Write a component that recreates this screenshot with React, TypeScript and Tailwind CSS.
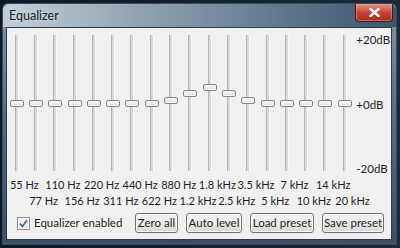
const offsets = [0, 0, 0, 0, 0, 0, 0, 0, -3, -10, -16, -10, -3, 0, 0, 0, 0, 0];

const rowA = ["55 Hz", "110 Hz", "220 Hz", "440 Hz", "880 Hz", "1.8 kHz", "3.5 kHz", "7 kHz", "14 kHz"];
const rowB = ["77 Hz", "156 Hz", "311 Hz", "622 Hz", "1.2 kHz", "2.5 kHz", "5 kHz", "10 kHz", "20 kHz"];

const Slider = ({ offset }: { offset: number }) => (
  <div className="relative flex h-full w-[19.31px] justify-center">
    <div className="mt-[2px] h-[136px] w-[4px] border-l border-r border-l-[#b4b4b4] border-r-[#fbfbfb] bg-[#d9d9d9]" />
    <div
      className="absolute left-1/2 h-[7px] w-[14px] -translate-x-1/2 rounded-[2px] border border-[#868686] bg-gradient-to-b from-[#fdfdfd] to-[#dcdcdc] shadow-[inset_0_0_0_1px_#f4f4f4]"
      style={{ top: 67 + offset }}
    />
  </div>
);

const Button = ({ label, w }: { label: string; w: string }) => (
  <button
    className={`flex h-[20px] ${w} items-center justify-center whitespace-nowrap rounded-[3px] border border-[#707070] bg-gradient-to-b from-[#f2f2f2] via-[#ebebeb] to-[#d6d6d6] leading-none text-[#1e1e1e] shadow-[inset_0_0_0_1px_#fcfcfc]`}
  >
    {label}
  </button>
);

export default function App() {
  return (
    <div className="h-[248px] w-[400px] overflow-hidden bg-gradient-to-r from-[#0e1924] via-[#14212e] to-[#1b2b3b] pl-[2px] pt-[3px] font-['Lato',sans-serif]">
      <div className="flex h-[242px] w-[395px] flex-col rounded-t-[6px] border border-[#3a4a58] bg-gradient-to-b from-[#8598a9] via-[#56697b] to-[#3e5062]">
        {/* title bar */}
        <div className="flex h-[23px] items-start justify-between rounded-t-[6px] bg-gradient-to-r from-[#c2cdd7] via-[#7c91a3] to-[#3c566c] pl-[6px]">
          <span className="mt-[6px] text-[12.5px] leading-none text-[#151a20] [text-shadow:0_0_6px_#e8eef3]">Equalizer</span>
          <div className="mr-[3px] flex h-[18px] w-[38px] items-center justify-center rounded-b-[4px] border border-t-0 border-[#4e1a12] bg-gradient-to-b from-[#e0968a] via-[#c64434] to-[#a92b1c] shadow-[inset_0_0_0_1px_#e9a69c80]">
            <svg width="11" height="9" viewBox="0 0 11 9">
              <path d="M1.5 1 L9.5 8 M9.5 1 L1.5 8" stroke="#fff" strokeWidth="2.4" strokeLinecap="square" />
            </svg>
          </div>
        </div>
        {/* client */}
        <div className="ml-[3px] flex h-[213px] w-[386px] flex-col border border-[#2d3b48] bg-[#f0f0f0] text-[11px] text-[#1e1e1e]">
          <div className="mt-[5px] flex h-[143px]">
            {offsets.map((o, i) => (
              <Slider key={i} offset={o} />
            ))}
            <div className="ml-[2px] flex flex-col justify-between text-[11.5px] leading-[14px]">
              <span>+20dB</span>
              <span>+0dB</span>
              <span>-20dB</span>
            </div>
          </div>
          <div className="-ml-[2px] flex h-[16px] items-center leading-none">
            {rowA.map((t) => (
              <span key={t} className="w-[38.62px] shrink-0 whitespace-nowrap text-center">
                {t}
              </span>
            ))}
          </div>
          <div className="-ml-[2px] flex h-[16px] items-center pl-[19.31px] leading-none">
            {rowB.map((t) => (
              <span key={t} className="w-[38.62px] shrink-0 whitespace-nowrap text-center">
                {t}
              </span>
            ))}
          </div>
          <div className="mt-[5px] flex items-center justify-between pl-[10px] pr-[7px] text-[11.5px]">
            <div className="flex items-center gap-[4px]">
              <div className="flex h-[13px] w-[13px] items-center justify-center border border-[#8e8f8f] bg-gradient-to-br from-[#f4f4f4] to-[#e6e6e6] shadow-[inset_0_0_0_1px_#fff]">
                <svg width="9" height="9" viewBox="0 0 9 9">
                  <path d="M1 4.5 L3.5 7.5 L8 1" fill="none" stroke="#4a5c9a" strokeWidth="1.6" />
                </svg>
              </div>
              <span className="leading-none">Equalizer enabled</span>
            </div>
            <div className="flex items-center gap-[8px]">
              <Button label="Zero all" w="w-[43px]" />
              <Button label="Auto level" w="w-[56px]" />
              <Button label="Load preset" w="w-[64px]" />
              <Button label="Save preset" w="w-[62px]" />
            </div>
          </div>
        </div>
      </div>
    </div>
  );
}
